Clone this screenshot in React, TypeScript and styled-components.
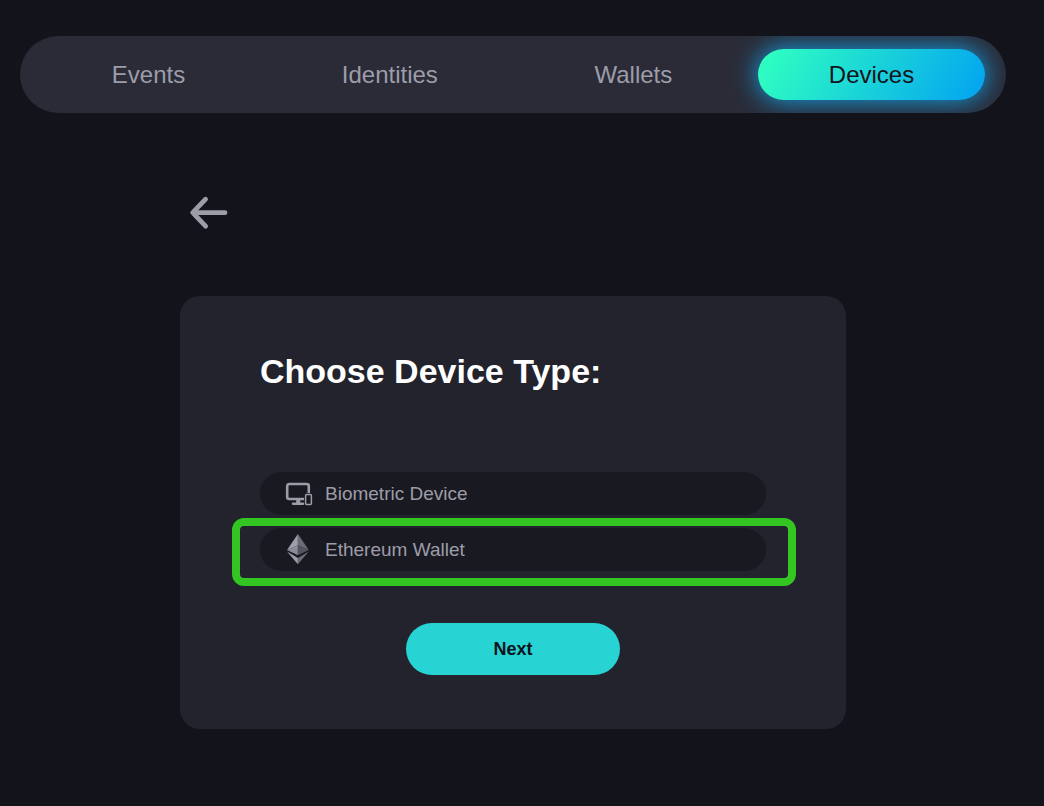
import React, { useState } from "react";
import styled, { createGlobalStyle } from "styled-components";

const GlobalStyle = createGlobalStyle`
  *, *::before, *::after { box-sizing: border-box; }
  body {
    margin: 0;
    background: #13131b;
    color: #9d9da9;
    font-family: "Liberation Sans", Arial, Helvetica, sans-serif;
  }
  button { font-family: inherit; cursor: pointer; }
`;

const Page = styled.div`
  padding: 36px 38px 76px 20px;
`;

const Nav = styled.nav`
  display: flex;
  gap: 15px;
  padding: 13px 21px;
  overflow: hidden;
  border-radius: 39px;
  background: #2a2b37;
`;

const Tab = styled.a<{ $active: boolean }>`
  flex: 1 1 auto;
  height: 51px;
  border-radius: 26px;
  font-size: 24px;
  line-height: 51px;
  text-align: center;
  text-decoration: none;
  color: ${({ $active }) => ($active ? "#13131b" : "#9d9da9")};
  background: ${({ $active }) =>
    $active ? "linear-gradient(120deg, #2fffc1 4%, #04a6f0 96%)" : "transparent"};
  box-shadow: ${({ $active }) => ($active ? "0 0 26px 1px #149fe4" : "none")};
`;

const Content = styled.main`
  max-width: 666px;
  margin: 0 auto;
  padding-top: 80px;
`;

const BackButton = styled.button`
  display: block;
  margin-left: 6px;
  padding: 0;
  border: 0;
  background: none;
  color: #9d9da9;

  svg { display: block; }
`;

const Card = styled.section`
  display: flex;
  flex-direction: column;
  margin-top: 63px;
  padding: 55px 80px 54px;
  border-radius: 20px;
  background: #23232e;
`;

const Title = styled.h1`
  margin: 0 0 81px;
  font-size: 34px;
  line-height: 40px;
  color: #fff;
`;

const Options = styled.div`
  display: flex;
  flex-direction: column;
  gap: 13px;
`;

const OptionSlot = styled.div`
  position: relative;
`;

const Option = styled.button`
  display: flex;
  align-items: center;
  gap: 12px;
  width: 100%;
  height: 43px;
  padding: 0 24px;
  border: 0;
  border-radius: 22px;
  background: #191921;
  color: #9d9da9;
  font-size: 19px;
  line-height: 24px;
  text-align: left;
`;

const Highlight = styled.span`
  position: absolute;
  inset: -10px -30px -15px -28px;
  border: 8px solid #33c623;
  border-radius: 12px;
  pointer-events: none;
`;

const NextButton = styled.button`
  align-self: center;
  width: 214px;
  height: 52px;
  margin-top: 52px;
  border: 0;
  border-radius: 26px;
  background: #27d3d3;
  color: #0d141b;
  font-size: 18px;
  font-weight: 700;
`;

const ArrowIcon = () => (
  <svg width="46" height="40" viewBox="0 0 46 40" fill="none" stroke="currentColor" strokeWidth="4.8" strokeLinecap="round" strokeLinejoin="round" aria-hidden="true">
    <path d="M19.600 6.200 6.700 19.700l12.900 13.500M7 19.700h32" />
  </svg>
);

const MonitorIcon = () => (
  <svg width="29" height="32" viewBox="0 0 29 32" fill="none" stroke="currentColor" aria-hidden="true">
    <path d="M20 21H5.200a2 2 0 0 1-2-2V8a2 2 0 0 1 2-2h17.600a2 2 0 0 1 2 2V15" strokeWidth="2.600" />
    <path d="M14.200 21v4.500" strokeWidth="4" />
    <path d="M9 25.700h10" strokeWidth="2.400" strokeLinecap="round" />
    <rect x="21.600" y="16.600" width="5.800" height="9.800" rx="1" fill="#191921" strokeWidth="1.500" />
  </svg>
);

const EthereumIcon = () => (
  <svg width="29" height="32" viewBox="0 0 29 32" aria-hidden="true">
    <path d="M13.900 0v11.200L3 16z" fill="#9e9eaa" />
    <path d="M13.900 0v11.200L24.800 16z" fill="#6c6c78" />
    <path d="M3 16l10.900-4.900v10.200z" fill="#8b8b97" />
    <path d="M24.800 16l-10.900-4.900v10.200z" fill="#545460" />
    <path d="M3 17.600l10.900 6.300V30.200z" fill="#9e9eaa" />
    <path d="M24.800 17.600l-10.900 6.300V30.200z" fill="#6c6c78" />
  </svg>
);

const tabs = ["Events", "Identities", "Wallets", "Devices"];

const deviceTypes = [
  { name: "Biometric Device", Icon: MonitorIcon },
  { name: "Ethereum Wallet", Icon: EthereumIcon },
];

export default function App() {
  const [selected, setSelected] = useState("Ethereum Wallet");

  return (
    <>
      <GlobalStyle />
      <Page>
        <Nav aria-label="Main">
          {tabs.map((tab) => (
            <Tab
              key={tab}
              href={`#${tab.toLowerCase()}`}
              $active={tab === "Devices"}
              aria-current={tab === "Devices" ? "page" : undefined}
            >
              {tab}
            </Tab>
          ))}
        </Nav>
        <Content>
          <BackButton type="button" aria-label="Back">
            <ArrowIcon />
          </BackButton>
          <Card>
            <Title>Choose Device Type:</Title>
            <Options>
              {deviceTypes.map(({ name, Icon }) => (
                <OptionSlot key={name}>
                  <Option
                    type="button"
                    aria-pressed={selected === name}
                    onClick={() => setSelected(name)}
                  >
                    <Icon />
                    {name}
                  </Option>
                  {selected === name && <Highlight />}
                </OptionSlot>
              ))}
            </Options>
            <NextButton type="button">Next</NextButton>
          </Card>
        </Content>
      </Page>
    </>
  );
}
